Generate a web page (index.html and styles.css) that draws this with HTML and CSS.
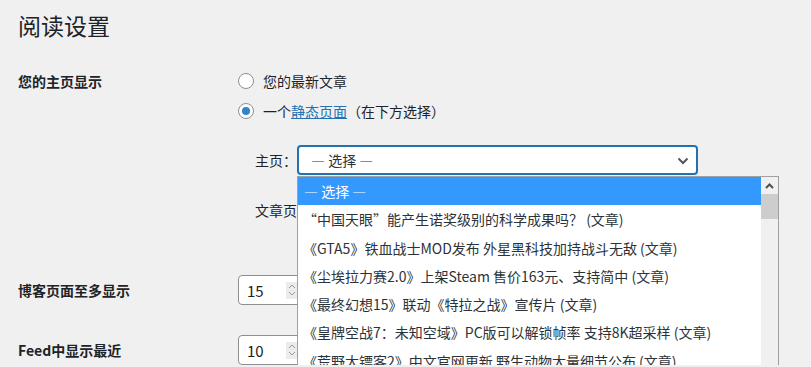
FILE: index.html
```html
<!DOCTYPE html>
<html lang="zh-CN">
<head>
    <meta charset="UTF-8">
    <title>阅读设置</title>
    <link rel="stylesheet" href="styles.css">
</head>
<body>
<div class="wrap">
    <h1 class="title">阅读设置</h1>

    <div class="row row-front">
        <div class="row-label">您的主页显示</div>
        <div class="row-field">
            <p class="radio-line"><span class="radio"></span>您的最新文章</p>
            <p class="radio-line"><span class="radio checked"></span>一个<a class="link" href="#">静态页面</a>（在下方选择）</p>

            <div class="sub">
                <p class="sub-line">主页：<span class="select focused">— 选择 —
                    <svg class="chevron" width="12" height="8" viewBox="0 0 12 8"><path d="M1.5 1.5 L6 6 L10.5 1.5" fill="none" stroke="#50575e" stroke-width="2"/></svg>
                </span></p>
                <p class="sub-line">文章页：<span class="select">— 选择 —</span></p>

                <!-- open dropdown of the 主页 select -->
                <div class="dropdown">
                    <ul class="options">
                        <li class="selected">— 选择 —</li>
                        <li>“中国天眼”能产生诺奖级别的科学成果吗？ (文章)</li>
                        <li>《GTA5》铁血战士MOD发布 外星黑科技加持战斗无敌 (文章)</li>
                        <li>《尘埃拉力赛2.0》上架Steam 售价163元、支持简中 (文章)</li>
                        <li>《最终幻想15》联动《特拉之战》宣传片 (文章)</li>
                        <li>《皇牌空战7：未知空域》PC版可以解锁帧率 支持8K超采样 (文章)</li>
                        <li>《荒野大镖客2》中文官网更新 野生动物大量细节公布 (文章)</li>
                    </ul>
                    <div class="scrollbar">
                        <div class="scroll-up">
                            <svg width="9" height="6" viewBox="0 0 9 6"><path d="M1 5 L4.5 1.5 L8 5" fill="none" stroke="#505050" stroke-width="2"/></svg>
                        </div>
                        <div class="scroll-thumb"></div>
                    </div>
                </div>
            </div>
        </div>
    </div>

    <div class="row row-posts">
        <div class="row-label">博客页面至多显示</div>
        <div class="row-field">
            <div class="num">15<span class="spin"><svg width="8" height="14" viewBox="0 0 8 14"><path d="M1 5 L4 2 L7 5 M1 9 L4 12 L7 9" fill="none" stroke="#9a9a9a" stroke-width="1"/></svg></span></div>
        </div>
    </div>

    <div class="row row-feed">
        <div class="row-label">Feed中显示最近</div>
        <div class="row-field">
            <div class="num">10<span class="spin"><svg width="8" height="14" viewBox="0 0 8 14"><path d="M1 5 L4 2 L7 5 M1 9 L4 12 L7 9" fill="none" stroke="#9a9a9a" stroke-width="1"/></svg></span></div>
        </div>
    </div>
</div>
</body>
</html>
```

FILE: styles.css
```css
body{
    margin: 0;
    background-color: #f0f0f1;
    color: #1d2327;
    font-family: "Noto Sans CJK SC", "Noto Sans", sans-serif;
    font-size: 14px;
    overflow: hidden;
}

.wrap{
    padding: 10px 0 0 18px;
}

.title{
    margin: 0;
    font-size: 23px;
    font-weight: 400;
    line-height: 30px;
}

.row{
    display: flex;
}
.row-front{
    margin-top: 26px;
}
.row-posts{
    margin-top: 50px;
}
.row-feed{
    margin-top: 30px;
}

.row-label{
    width: 220px;
    flex-shrink: 0;
    font-weight: 700;
    line-height: 30px;
}

.row-field{
    flex: 1;
}

.radio-line{
    margin: 0;
    height: 30px;
    display: flex;
    align-items: center;
}

.radio{
    width: 14px;
    height: 14px;
    border: 1px solid #8c8f94;
    border-radius: 50%;
    background: #fff;
    margin-right: 9px;
    position: relative;
}
.radio.checked::after{
    content: "";
    position: absolute;
    left: 3px;
    top: 3px;
    width: 8px;
    height: 8px;
    border-radius: 50%;
    background: #3582c4;
}

.link{
    color: #2271b1;
}

.sub{
    position: relative;
    margin-left: 17px;
    padding-top: 19px;
}

.sub-line{
    margin: 0 0 20px 0;
    height: 30px;
    display: flex;
    align-items: center;
}
.sub-line:nth-child(2){
    margin-bottom: 0;
}

.select{
    box-sizing: border-box;
    width: 401px;
    height: 30px;
    display: flex;
    align-items: center;
    padding-left: 13px;
    background: #fff;
    border: 1px solid #8c8f94;
    border-radius: 4px;
    color: #2c3338;
    position: relative;
}
.select.focused{
    border: 2px solid #2271b1;
    padding-left: 12px;
}
.chevron{
    position: absolute;
    right: 7px;
    top: 10px;
}

.dropdown{
    position: absolute;
    left: 42px;
    top: 50px;
    width: 482px;
    height: 230px;
    box-sizing: border-box;
    border: 1px solid #a0a0a0;
    border-bottom: none;
    background: #fff;
    display: flex;
}

.options{
    list-style: none;
    margin: 0;
    padding: 0;
    flex: 1;
}
.options li{
    height: 28.3px;
    line-height: 28px;
    padding-left: 5px;
    color: #2c3338;
    white-space: nowrap;
}
.options li.selected{
    background: #3399ff;
    color: #fff;
    padding-left: 6px;
}

.scrollbar{
    width: 17px;
    background: #f0f0f0;
}
.scroll-up{
    height: 17px;
    display: flex;
    align-items: center;
    justify-content: center;
}
.scroll-thumb{
    height: 25px;
    background: #cdcdcd;
}

.num{
    box-sizing: border-box;
    width: 65px;
    height: 30px;
    border: 1px solid #8c8f94;
    border-radius: 4px;
    background: #fff;
    padding-left: 8px;
    display: flex;
    align-items: center;
    justify-content: space-between;
    font-size: 15px;
}
.spin{
    width: 11px;
    height: 17px;
    margin-right: 5px;
    background: #ececec;
    display: flex;
    align-items: center;
    justify-content: center;
}
```
